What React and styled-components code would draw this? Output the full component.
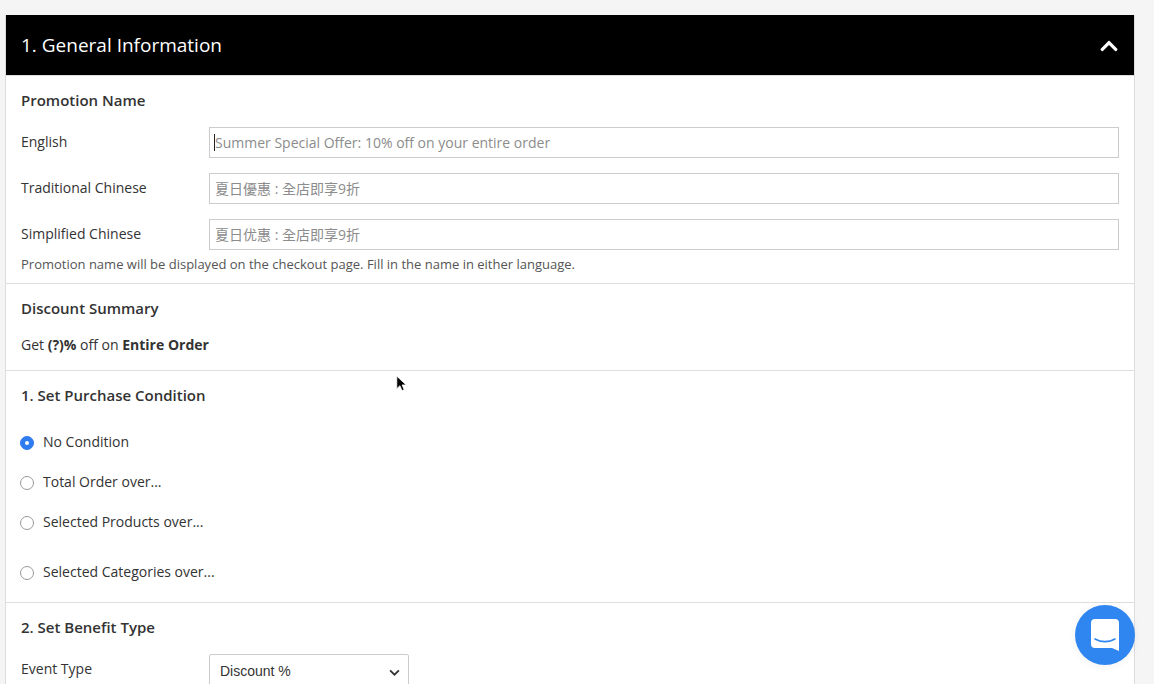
import React from "react";
import styled, { createGlobalStyle } from "styled-components";
import { FaChevronUp } from "react-icons/fa";

const FONT = `"Open Sans", "Noto Sans CJK TC", sans-serif`;

const nameFields = [
  { label: "English", placeholder: "Summer Special Offer: 10% off on your entire order", caret: true },
  { label: "Traditional Chinese", placeholder: "夏日優惠 : 全店即享9折" },
  { label: "Simplified Chinese", placeholder: "夏日优惠 : 全店即享9折" },
];

const conditions = [
  { label: "No Condition", checked: true, height: 40 },
  { label: "Total Order over...", height: 40 },
  { label: "Selected Products over...", height: 50 },
  { label: "Selected Categories over...", height: 30 },
];

class App extends React.Component {
  render() {
    return (
      <Page>
        <GlobalStyle />
        <Card>
          <Header>
            <HeaderTitle>1. General Information</HeaderTitle>
            <Chevron size={20} color="#fff" />
          </Header>

          <NameSection>
            <SectionTitle>Promotion Name</SectionTitle>
            <Fields>
              {nameFields.map((field) => (
                <FieldRow key={field.label}>
                  <FieldLabel>{field.label}</FieldLabel>
                  <InputWrap>
                    <TextInput placeholder={field.placeholder} readOnly />
                    {field.caret && <Caret />}
                  </InputWrap>
                </FieldRow>
              ))}
            </Fields>
            <Help>
              Promotion name will be displayed on the checkout page. Fill in the
              name in either language.
            </Help>
          </NameSection>

          <SummarySection>
            <SectionTitle>Discount Summary</SectionTitle>
            <SummaryText>
              Get <b>(?)%</b> off on <b>Entire Order</b>
            </SummaryText>
          </SummarySection>

          <ConditionSection>
            <SectionTitle>1. Set Purchase Condition</SectionTitle>
            <RadioList>
              {conditions.map((item) => (
                <RadioRow key={item.label} $height={item.height}>
                  <RadioDot $checked={item.checked} />
                  <span>{item.label}</span>
                </RadioRow>
              ))}
            </RadioList>
          </ConditionSection>

          <BenefitSection>
            <SectionTitle>2. Set Benefit Type</SectionTitle>
            <EventRow>
              <FieldLabel>Event Type</FieldLabel>
              <SelectWrap>
                <Select defaultValue="discount">
                  <option value="discount">Discount %</option>
                </Select>
                <SelectArrow viewBox="0 0 10 6">
                  <path d="M1 1l4 4 4-4" fill="none" stroke="#333" strokeWidth="1.6" />
                </SelectArrow>
              </SelectWrap>
            </EventRow>
          </BenefitSection>
        </Card>

        <Pointer viewBox="0 0 14 22">
          <path
            d="M1 1v16l4-3.8 2.6 6.2 2.8-1.2-2.6-6H13z"
            fill="#000"
            stroke="#fff"
            strokeWidth="1"
          />
        </Pointer>

        <ChatButton>
          <svg width="28" height="32" viewBox="0 0 28 32">
            <path
              d="M4 0h20a4 4 0 0 1 4 4v28l-7-3H4a4 4 0 0 1-4-4V4a4 4 0 0 1 4-4z"
              fill="#fff"
            />
            <path
              d="M4 20c6 3.5 14 3.5 20 0"
              fill="none"
              stroke="#2f86f0"
              strokeWidth="1.6"
              strokeLinecap="round"
            />
          </svg>
        </ChatButton>
      </Page>
    );
  }
}

const GlobalStyle = createGlobalStyle`
  html, body {
    margin: 0;
    height: 100%;
    overflow: hidden;
    background: #f5f5f5;
  }
  * {
    box-sizing: border-box;
  }
`;

const Page = styled.div`
  height: 684px;
  padding: 15px 0 0 5px;
  overflow: hidden;
  font-family: ${FONT};
  font-size: 14px;
  color: #333;
`;

const Card = styled.div`
  width: 1130px;
  background: #fff;
  border-left: 1px solid #ddd;
  border-right: 1px solid #ddd;
`;

const Header = styled.div`
  height: 60px;
  background: #000;
  color: #fff;
  display: flex;
  align-items: center;
  justify-content: space-between;
  padding: 0 15px;
`;

const HeaderTitle = styled.div`
  font-size: 19px;
`;

const Chevron = styled(FaChevronUp)`
  margin-top: 2px;
`;

const Section = styled.div`
  padding: 0 15px;
  border-bottom: 1px solid #ddd;
`;

const NameSection = styled(Section)`
  height: 209px;
  padding-top: 15px;
  border-top: 1px solid #ddd;
`;

const SummarySection = styled(Section)`
  height: 87px;
  padding-top: 15px;
`;

const ConditionSection = styled(Section)`
  height: 232px;
  padding-top: 15px;
`;

const BenefitSection = styled(Section)`
  padding-top: 15px;
  border-bottom: none;
`;

const SectionTitle = styled.div`
  font-size: 15px;
  line-height: 18px;
  font-weight: 600;
`;

const Fields = styled.div`
  display: flex;
  flex-direction: column;
  gap: 15px;
  margin-top: 18px;
`;

const FieldRow = styled.div`
  display: flex;
  height: 31px;
`;

const FieldLabel = styled.div`
  width: 188px;
  flex: none;
  line-height: 30px;
`;

const InputWrap = styled.div`
  position: relative;
  flex: 1;
`;

const TextInput = styled.input`
  display: block;
  width: 100%;
  height: 31px;
  padding: 0 5px;
  border: 1px solid #ccc;
  border-radius: 0;
  outline: none;
  font-family: ${FONT};
  font-size: 14px;
  &::placeholder {
    color: #8c8c8c;
    opacity: 1;
  }
`;

const Caret = styled.div`
  position: absolute;
  left: 5px;
  top: 7px;
  width: 1px;
  height: 17px;
  background: #222;
`;

const Help = styled.div`
  margin-top: 6px;
  font-size: 13px;
  line-height: 17px;
  color: #555;
`;

const SummaryText = styled.div`
  margin-top: 18px;
  line-height: 20px;
`;

const RadioList = styled.div`
  margin-top: 28px;
`;

const RadioRow = styled.div`
  display: flex;
  align-items: flex-start;
  gap: 9px;
  height: ${(p) => p.$height}px;
  line-height: 20px;
`;

const RadioDot = styled.span`
  position: relative;
  width: 14px;
  height: 14px;
  margin: 4px 0 0 -1px;
  flex: none;
  border-radius: 50%;
  border: 1px solid ${(p) => (p.$checked ? "#2f7bf0" : "#999")};
  background: ${(p) => (p.$checked ? "#2f7bf0" : "#fff")};
  &::after {
    content: "";
    display: ${(p) => (p.$checked ? "block" : "none")};
    position: absolute;
    left: 4px;
    top: 4px;
    width: 4px;
    height: 4px;
    border-radius: 50%;
    background: #fff;
  }
`;

const EventRow = styled.div`
  display: flex;
  margin-top: 18px;
  height: 40px;
`;

const SelectWrap = styled.div`
  position: relative;
  width: 200px;
  height: 34px;
`;

const Select = styled.select`
  width: 100%;
  height: 100%;
  appearance: none;
  padding: 0 10px;
  background: #fff;
  border: 1px solid #ccc;
  border-radius: 2px;
  font-family: "Liberation Sans", Arial, sans-serif;
  font-size: 14px;
  color: #333;
`;

const SelectArrow = styled.svg`
  position: absolute;
  right: 9px;
  top: 15px;
  width: 11px;
  height: 7px;
`;

const Pointer = styled.svg`
  position: absolute;
  left: 396px;
  top: 375px;
  width: 11px;
  height: 18px;
`;

const ChatButton = styled.div`
  position: absolute;
  left: 1075px;
  top: 605px;
  width: 60px;
  height: 60px;
  border-radius: 50%;
  background: #2f86f0;
  display: flex;
  align-items: center;
  justify-content: center;
  box-shadow: 0 1px 10px rgba(0, 0, 0, 0.06);
`;

export default App;
